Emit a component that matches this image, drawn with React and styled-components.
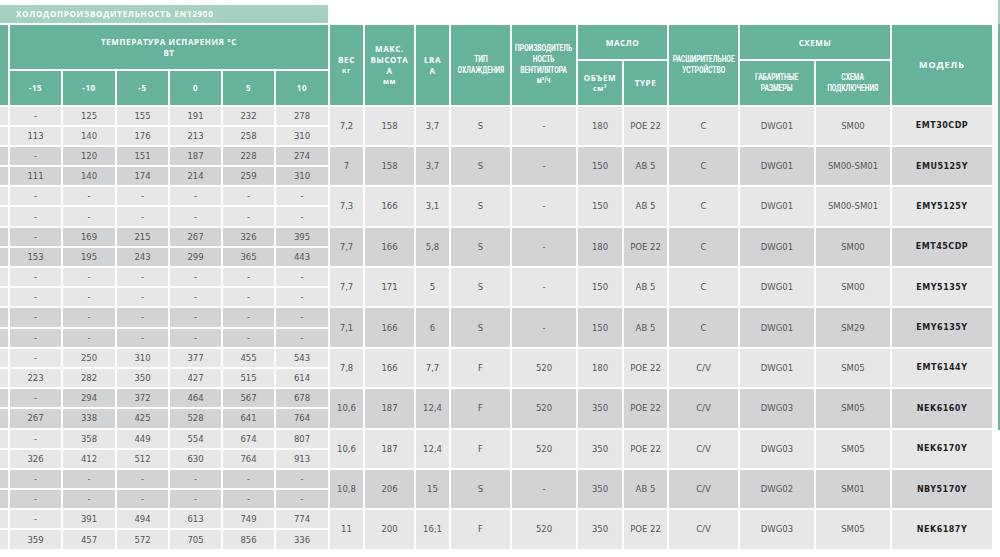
import styled, { createGlobalStyle } from "styled-components";

const GlobalStyle = createGlobalStyle`
  html, body {
    margin: 0;
    padding: 0;
    background: #ffffff;
  }
  body {
    font-family: "Open Sans", "DejaVu Sans", sans-serif;
  }
`;

const temps = ["-15", "-10", "-5", "0", "5", "10"];
const empty = ["-", "-", "-", "-", "-", "-"];

const rows = [
  {
    a: ["-", "125", "155", "191", "232", "278"],
    b: ["113", "140", "176", "213", "258", "310"],
    rest: ["7,2", "158", "3,7", "S", "-", "180", "POE 22", "C", "DWG01", "SM00"],
    model: "EMT30CDP",
  },
  {
    a: ["-", "120", "151", "187", "228", "274"],
    b: ["111", "140", "174", "214", "259", "310"],
    rest: ["7", "158", "3,7", "S", "-", "150", "AB 5", "C", "DWG01", "SM00-SM01"],
    model: "EMU5125Y",
  },
  {
    a: empty,
    b: empty,
    rest: ["7,3", "166", "3,1", "S", "-", "150", "AB 5", "C", "DWG01", "SM00-SM01"],
    model: "EMY5125Y",
  },
  {
    a: ["-", "169", "215", "267", "326", "395"],
    b: ["153", "195", "243", "299", "365", "443"],
    rest: ["7,7", "166", "5,8", "S", "-", "180", "POE 22", "C", "DWG01", "SM00"],
    model: "EMT45CDP",
  },
  {
    a: empty,
    b: empty,
    rest: ["7,7", "171", "5", "S", "-", "150", "AB 5", "C", "DWG01", "SM00"],
    model: "EMY5135Y",
  },
  {
    a: empty,
    b: empty,
    rest: ["7,1", "166", "6", "S", "-", "150", "AB 5", "C", "DWG01", "SM29"],
    model: "EMY6135Y",
  },
  {
    a: ["-", "250", "310", "377", "455", "543"],
    b: ["223", "282", "350", "427", "515", "614"],
    rest: ["7,8", "166", "7,7", "F", "520", "180", "POE 22", "C/V", "DWG01", "SM05"],
    model: "EMT6144Y",
  },
  {
    a: ["-", "294", "372", "464", "567", "678"],
    b: ["267", "338", "425", "528", "641", "764"],
    rest: ["10,6", "187", "12,4", "F", "520", "350", "POE 22", "C/V", "DWG03", "SM05"],
    model: "NEK6160Y",
  },
  {
    a: ["-", "358", "449", "554", "674", "807"],
    b: ["326", "412", "512", "630", "764", "913"],
    rest: ["10,6", "187", "12,4", "F", "520", "350", "POE 22", "C/V", "DWG03", "SM05"],
    model: "NEK6170Y",
  },
  {
    a: empty,
    b: empty,
    rest: ["10,8", "206", "15", "S", "-", "350", "AB 5", "C/V", "DWG02", "SM01"],
    model: "NBY5170Y",
  },
  {
    a: ["-", "391", "494", "613", "749", "774"],
    b: ["359", "457", "572", "705", "856", "336"],
    rest: ["11", "200", "16,1", "F", "520", "350", "POE 22", "C/V", "DWG03", "SM05"],
    model: "NEK6187Y",
  },
];

function Head({ lines = [], small, narrow, big, cs, rs }) {
  return (
    <HeadCell $cs={cs} $rs={rs}>
      <Label $narrow={narrow} $big={big}>
        {lines.map((l) => (
          <Line key={l}>{l}</Line>
        ))}
        {small && <Small>{small}</Small>}
      </Label>
    </HeadCell>
  );
}

function App() {
  return (
    <>
      <GlobalStyle />
      <Page>
        <Main>
          <TitleBar>ХОЛОДОПРОИЗВОДИТЕЛЬНОСТЬ EN12900</TitleBar>
          <Table>
            <Head rs={3} />
            <Head cs={6} rs={2} lines={["ТЕМПЕРАТУРА ИСПАРЕНИЯ °С", "ВТ"]} />
            <Head rs={3} lines={["ВЕС"]} small="кг" />
            <Head rs={3} lines={["МАКС.", "ВЫСОТА", "А"]} small="мм" />
            <Head rs={3} lines={["LRA", "A"]} />
            <Head rs={3} narrow lines={["ТИП", "ОХЛАЖДЕНИЯ"]} />
            <Head
              rs={3}
              narrow
              lines={["ПРОИЗВОДИТЕЛЬ", "НОСТЬ", "ВЕНТИЛЯТОРА", "м³/ч"]}
            />
            <Head cs={2} lines={["МАСЛО"]} />
            <Head rs={3} narrow lines={["РАСШИРИТЕЛЬНОЕ", "УСТРОЙСТВО"]} />
            <Head cs={2} lines={["СХЕМЫ"]} />
            <Head rs={3} big lines={["МОДЕЛЬ"]} />
            <Head rs={2} lines={["ОБЪЕМ"]} small="см³" />
            <Head rs={2} lines={["TYPE"]} />
            <Head rs={2} narrow lines={["ГАБАРИТНЫЕ", "РАЗМЕРЫ"]} />
            <Head rs={2} narrow lines={["СХЕМА", "ПОДКЛЮЧЕНИЯ"]} />
            {temps.map((t) => (
              <Head key={t} lines={[t]} />
            ))}

            {rows.map((r, i) => {
              const dark = i % 2 === 1;
              return [
                <Cell key={`l${i}a`} $dark={dark} />,
                ...r.a.map((v, j) => (
                  <Cell key={`a${i}-${j}`} $dark={dark}>
                    {v}
                  </Cell>
                )),
                ...r.rest.map((v, j) => (
                  <Cell key={`r${i}-${j}`} $dark={dark} $rs={2}>
                    {v}
                  </Cell>
                )),
                <Cell key={`m${i}`} $dark={dark} $rs={2} $model>
                  {r.model}
                </Cell>,
                <Cell key={`l${i}b`} $dark={dark} />,
                ...r.b.map((v, j) => (
                  <Cell key={`b${i}-${j}`} $dark={dark}>
                    {v}
                  </Cell>
                )),
              ];
            })}
          </Table>
        </Main>
        <EdgeLine />
      </Page>
    </>
  );
}

export default App;

const Page = styled.div`
  display: flex;
  align-items: flex-start;
  gap: 6px;
  width: 1000px;
`;

const Main = styled.div`
  width: 992px;
  padding-top: 5px;
  display: flex;
  flex-direction: column;
  gap: 2px;
`;

const TitleBar = styled.div`
  width: 312px;
  height: 18px;
  padding-left: 16px;
  background: #a6d1c0;
  color: #ffffff;
  font-family: "Open Sans", sans-serif;
  font-weight: 700;
  font-size: 8px;
  letter-spacing: 0.75px;
  line-height: 18px;
`;

const Table = styled.div`
  display: grid;
  grid-template-columns:
    8px 51px 52px 51px 51px 51px 52px 33px 49px 33px 59px 64px
    44px 43px 69px 74px 74px 100px;
  grid-template-rows: 34px 8px 33.5px repeat(22, 18.2px);
  gap: 2px;
`;

const HeadCell = styled.div`
  grid-column: span ${(p) => p.$cs || 1};
  grid-row: span ${(p) => p.$rs || 1};
  display: flex;
  align-items: center;
  justify-content: center;
  background: #66b29a;
  overflow: hidden;
`;

const Label = styled.div`
  display: flex;
  flex-direction: column;
  align-items: center;
  color: #ffffff;
  font-family: ${(p) =>
    p.$narrow ? `"Roboto", sans-serif` : `"Open Sans", sans-serif`};
  font-weight: 700;
  font-size: ${(p) => (p.$narrow ? "8.5px" : p.$big ? "9px" : "8px")};
  letter-spacing: ${(p) => (p.$narrow ? "0" : p.$big ? "1px" : "0.6px")};
  line-height: ${(p) => (p.$narrow ? "10.7px" : "11px")};
  white-space: nowrap;
  transform: ${(p) => (p.$narrow ? "scaleX(0.78)" : "none")};
`;

const Line = styled.span`
  display: block;
`;

const Small = styled.span`
  display: block;
  font-size: 7px;
  letter-spacing: 0.6px;
`;

const Cell = styled.div`
  grid-row: span ${(p) => p.$rs || 1};
  display: flex;
  align-items: center;
  justify-content: center;
  background: ${(p) => (p.$dark ? "#d2d3d5" : "#e7e7e8")};
  color: ${(p) => (p.$model ? "#1f1f1f" : "#555555")};
  font-family: "DejaVu Sans", sans-serif;
  font-weight: ${(p) => (p.$model ? 700 : 400)};
  font-size: ${(p) => (p.$model ? "8px" : "8.5px")};
  letter-spacing: ${(p) => (p.$model ? "0.5px" : "0")};
  white-space: nowrap;
`;

const EdgeLine = styled.div`
  width: 2px;
  height: 430px;
  background: linear-gradient(#a6d1c0 0 24px, #6db89d 24px);
`;
